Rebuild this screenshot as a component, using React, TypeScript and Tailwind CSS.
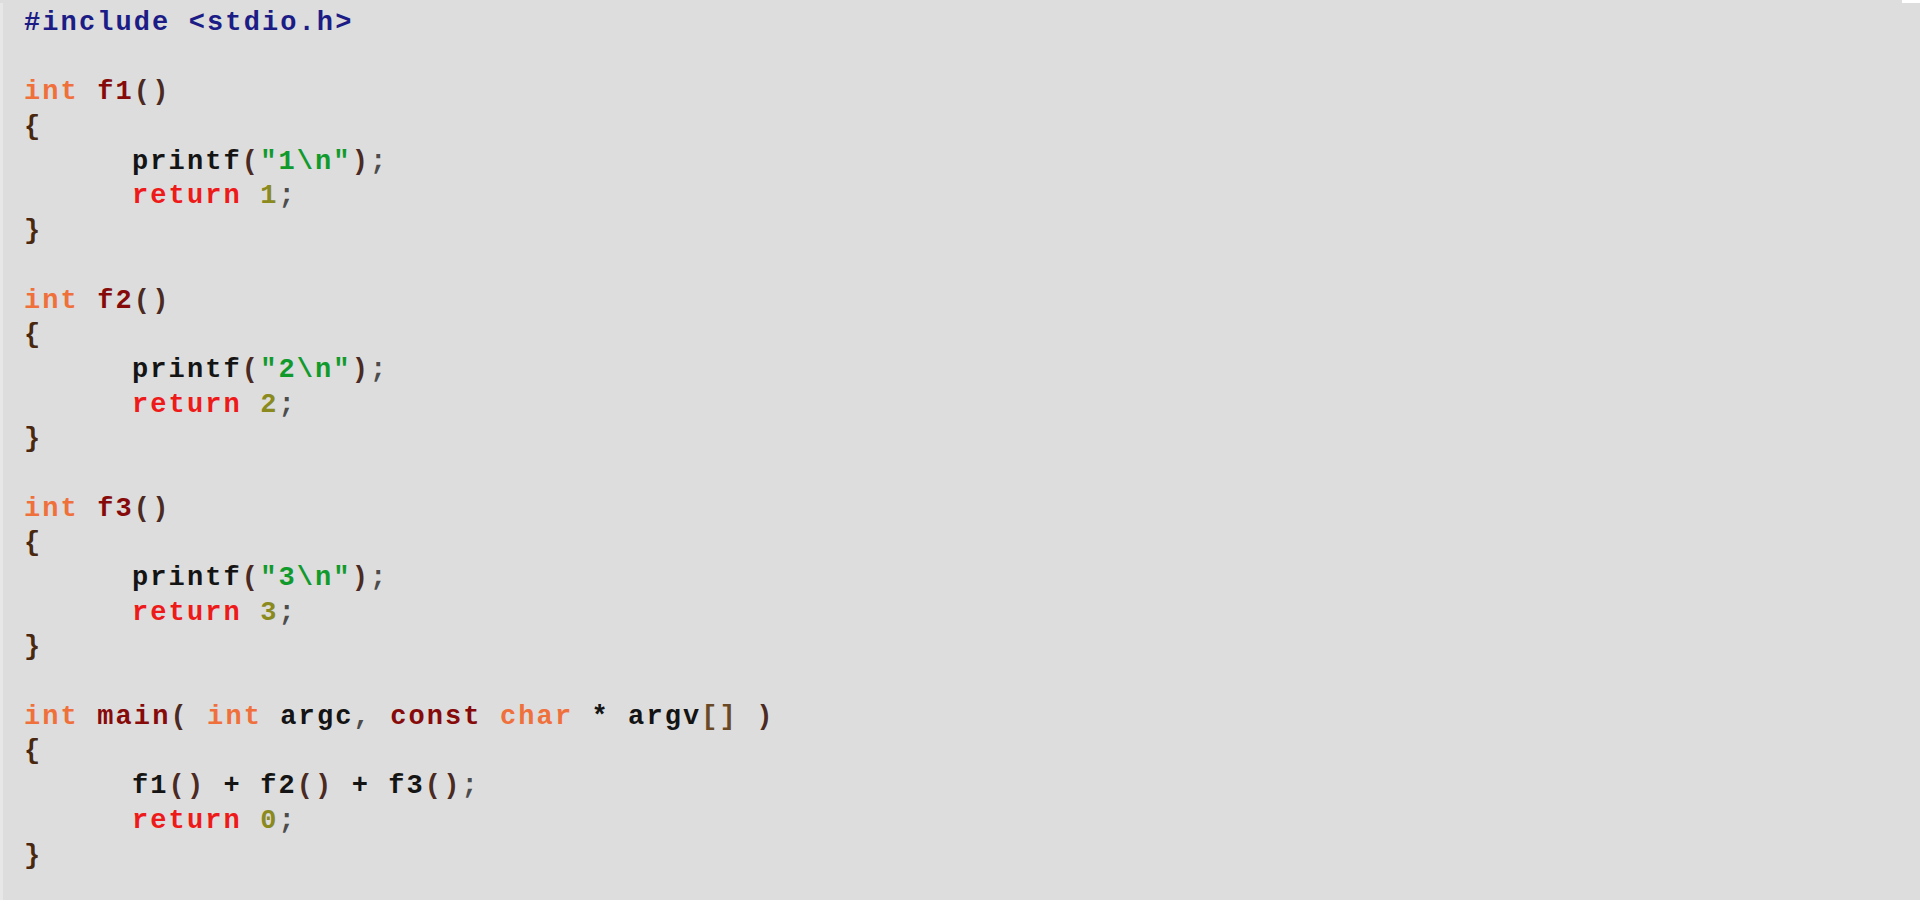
import type { ReactNode } from "react";

type Tok = [string, string];

const C = {
  pre: "text-[#1c1c86]",
  type: "text-[#f0703c]",
  fn: "text-[#860a0a]",
  paren: "text-[#4a2a22]",
  brace: "text-[#4a2810]",
  plain: "text-[#141414]",
  str: "text-[#119a2c]",
  kw: "text-[#ee1a1a]",
  num: "text-[#8a8a1e]",
  semi: "text-[#4c4c4c]",
};

const t = (cls: string, s: string): Tok => [cls, s];

const fnBlock = (n: string): Tok[][] => [
  [t(C.type, "int"), t(C.plain, " "), t(C.fn, `f${n}`), t(C.paren, "()")],
  [t(C.brace, "{")],
  [t(C.plain, "printf"), t(C.paren, "("), t(C.str, `"${n}\\n"`), t(C.paren, ")"), t(C.semi, ";")],
  [t(C.kw, "return"), t(C.plain, " "), t(C.num, n), t(C.semi, ";")],
  [t(C.brace, "}")],
  [],
];

const lines: Tok[][] = [
  [t(C.pre, "#include <stdio.h>")],
  [],
  ...fnBlock("1"),
  ...fnBlock("2"),
  ...fnBlock("3"),
  [
    t(C.type, "int"),
    t(C.plain, " "),
    t(C.fn, "main"),
    t(C.paren, "("),
    t(C.plain, " "),
    t(C.type, "int"),
    t(C.plain, " argc"),
    t(C.semi, ","),
    t(C.plain, " "),
    t(C.fn, "const"),
    t(C.plain, " "),
    t(C.type, "char"),
    t(C.plain, " * argv"),
    t("text-[#6a4a26]", "[]"),
    t(C.plain, " "),
    t(C.paren, ")"),
  ],
  [t(C.brace, "{")],
  [
    t(C.plain, "f1"),
    t(C.paren, "()"),
    t(C.plain, " + f2"),
    t(C.paren, "()"),
    t(C.plain, " + f3"),
    t(C.paren, "()"),
    t(C.semi, ";"),
  ],
  [t(C.kw, "return"), t(C.plain, " "), t(C.num, "0"), t(C.semi, ";")],
  [t(C.brace, "}")],
];

// body lines of each function are tab-indented
const indented = new Set([4, 5, 10, 11, 16, 17, 22, 23]);

function Line({ toks, indent }: { toks: Tok[]; indent: boolean }) {
  const content: ReactNode = toks.map(([cls, s], i) => (
    <span key={i} className={cls}>
      {s}
    </span>
  ));
  return (
    <div className={`h-[34.7px] leading-[34.7px] whitespace-pre ${indent ? "pl-[108px]" : ""}`}>
      {toks.length ? content : "\u00a0"}
    </div>
  );
}

export default function App() {
  return (
    <div className="w-[1920px] h-[900px] overflow-hidden bg-[#dddddd] flex flex-col">
      <div className="h-[3px] flex shrink-0">
        <div className="flex-1" />
        <div className="w-[18px] bg-white" />
      </div>
      <div className="flex-1 border-l-[3px] border-[#e7e7e7] pl-[21px] pt-[3px] font-['Liberation_Mono','Courier_New',monospace] font-bold text-[27px] tracking-[2.1px]">
        {lines.map((l, i) => (
          <Line key={i} toks={l} indent={indented.has(i)} />
        ))}
      </div>
    </div>
  );
}
